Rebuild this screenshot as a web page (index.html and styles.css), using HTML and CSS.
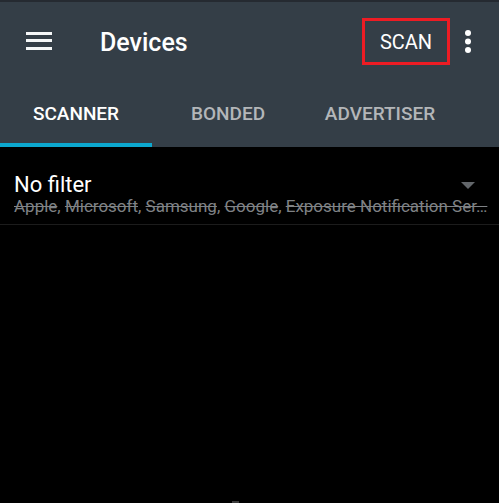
FILE: index.html
```html
<!DOCTYPE html>
<html lang="en">
<head>
<meta charset="utf-8">
<meta name="viewport" content="width=device-width, initial-scale=1">
<title>Devices</title>
<link rel="stylesheet" href="styles.css">
</head>
<body>
<header class="header">
  <div class="toolbar">
    <button class="icon-button menu" type="button" aria-label="Menu">
      <svg width="26" height="20" viewBox="0 0 26 20" fill="#f5f7f8"><path d="M0 1h26v3H0zM0 8h26v3H0zM0 16h26v3H0z"/></svg>
    </button>
    <h1 class="title">Devices</h1>
    <button class="scan" type="button">SCAN</button>
    <button class="icon-button more" type="button" aria-label="More options">
      <svg width="8" height="24" viewBox="0 0 8 24" fill="#fff"><circle cx="4" cy="4" r="3"/><circle cx="4" cy="12.500" r="3"/><circle cx="4" cy="21" r="3"/></svg>
    </button>
  </div>
  <nav class="tabs">
    <a class="tab active" href="#scanner" aria-current="page">SCANNER</a>
    <a class="tab" href="#bonded">BONDED</a>
    <a class="tab" href="#advertiser">ADVERTISER</a>
  </nav>
</header>
<main class="content" id="scanner">
  <button class="filter" type="button">
    <span class="filter-row">
      <span class="filter-name">No filter</span>
      <svg width="14" height="8" viewBox="0 0 14 8" fill="#62666a"><path d="M0 1h14L7 8z"/></svg>
    </span>
    <span class="excluded"><s>Apple</s>, <s>Microsoft</s>, <s>Samsung</s>, <s>Google</s>, <s>Exposure Notification Ser…</s></span>
  </button>
</main>
<footer class="footer"><span class="handle"></span></footer>
</body>
</html>
```
FILE: styles.css
```css
* {
  box-sizing: border-box;
}

body {
  margin: 0;
  min-height: 100vh;
  display: flex;
  flex-direction: column;
  background: #000;
  color: #fff;
  font-family: Roboto, "Liberation Sans", sans-serif;
}

button {
  margin: 0;
  padding: 0;
  border: 0;
  background: none;
  color: inherit;
  font-family: inherit;
  cursor: pointer;
}

svg {
  display: block;
}

.header {
  background: #343e47;
  border-top: 2px solid #252a31;
}

.toolbar {
  display: flex;
  align-items: center;
  height: 78px;
  padding: 0 26px;
}

.title {
  flex: 1;
  margin: 0 0 0 48px;
  padding-top: 3px;
  font-size: 25px;
  line-height: 32px;
  font-weight: 500;
}

.scan {
  width: 88px;
  height: 47px;
  padding-top: 2px;
  border: 3px solid #ed1c24;
  font-size: 20px;
  font-weight: 400;
}

.more {
  margin-left: 14px;
  margin-right: 1px;
}

.tabs {
  display: flex;
  height: 67px;
}

.tab {
  display: flex;
  align-items: center;
  justify-content: center;
  flex: 0 0 auto;
  min-width: 152px;
  padding: 4px 16px 0;
  border-bottom: 4px solid transparent;
  color: #b3b6b9;
  font-size: 19px;
  font-weight: 500;
  text-decoration: none;
}

.tab.active {
  border-bottom-color: #0ca8cf;
  color: #fff;
}

.content {
  flex: 1;
}

.filter {
  display: block;
  width: 100%;
  padding: 26px 10px 8px 14px;
  border-bottom: 1px solid #1c1c1c;
  text-align: left;
}

.filter-row {
  display: flex;
  align-items: center;
  justify-content: space-between;
  padding-right: 14px;
}

.filter-name {
  font-size: 22px;
  line-height: 23px;
}

.excluded {
  display: block;
  color: #7f8285;
  font-size: 17px;
  line-height: 20px;
  white-space: nowrap;
}

.footer {
  display: flex;
  justify-content: center;
  padding-right: 28px;
}

.handle {
  width: 7px;
  height: 2px;
  background: #3c3c3c;
}
```
